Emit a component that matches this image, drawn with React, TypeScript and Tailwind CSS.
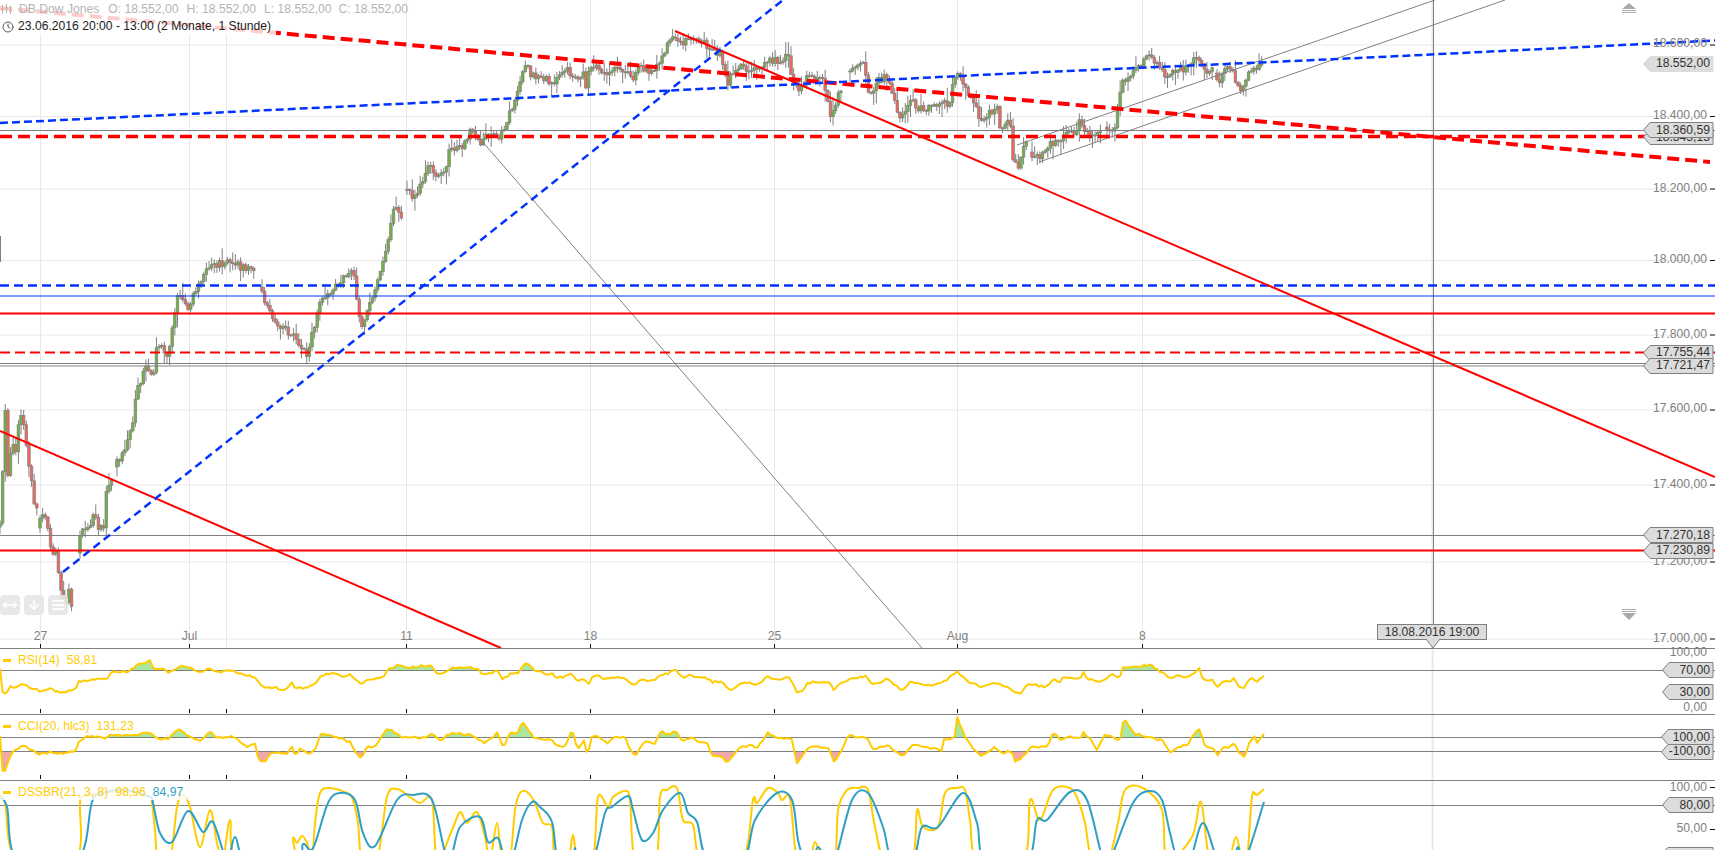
import { useMemo } from 'react';
import { ArrowDown, AlignJustify, Clock, MoveHorizontal } from 'lucide-react';

type Pt = [number, number];

const GRAY = '#808080';
const RED = '#ff0000';
const BLUE = '#0033ff';
const YELLOW = '#ffcc00';
const TEAL = '#2e9fc5';

// price path read off the chart, split where the session gaps are
const priceSegments: Pt[][] = [
  [[0,527],[3,527],[8,410],[10,478],[15,443],[18,457],[23,410],[28,430],[30,457],[35,487],[37,505]],
  [[40,528],[47,510],[52,533],[55,560],[60,547],[62,590],[68,603],[72,587],[74,607]],
  [[80,553],[84,530],[90,528],[95,520],[97,503],[100,527],[107,527],[108,493],[113,483]],
  [[117,467],[127,453],[133,430],[137,413],[138,397],[143,383],[148,363],[153,370],[157,373],[158,350],[163,345],[170,360],[173,345],[180,295],[191,306],[210,268],[230,262],[254,270]],
  [[262,287],[273,312],[284,328],[295,333],[310,355],[323,301],[339,284],[356,273],[363,328],[377,290],[388,252],[396,213],[397,208],[403,217]],
  [[407,190],[418,197],[427,177],[433,163],[438,180],[447,173],[452,150],[465,147],[473,132],[483,143],[497,130],[503,137],[514,109],[522,87],[527,62],[533,73],[543,78],[557,82],[570,70],[580,82],[586,73],[587,97],[590,73],[597,63],[607,73],[623,67],[635,80],[642,68],[657,72],[667,53],[675,33],[683,43],[697,42],[708,42],[713,50],[723,53],[730,82],[742,67],[757,70],[767,62],[780,60],[792,57],[795,83],[802,90],[812,75],[827,83],[833,117],[843,90]],
  [[850,72],[867,65],[872,97],[880,80],[890,78],[897,100],[903,123],[912,97],[920,108],[937,108],[943,100],[952,105],[957,75],[962,73],[967,90],[975,95],[982,122],[990,113],[1000,110],[1003,130],[1010,120],[1014,130],[1015,157],[1022,167],[1027,142]],
  [[1032,152],[1038,157],[1047,155],[1052,142],[1062,145],[1068,133],[1078,135],[1083,120],[1088,132],[1098,138],[1103,133]],
  [[1107,127],[1118,127],[1122,97],[1125,80],[1137,73],[1143,65],[1152,57],[1160,65],[1170,77],[1182,70],[1192,65],[1200,53],[1203,65],[1207,73],[1213,68]],
  [[1217,73],[1222,82],[1227,72],[1237,67],[1238,83],[1247,90],[1250,75],[1257,67],[1258,75],[1263,62]],
];

const rsi: Pt[] = [[0,670],[3,696],[7,693],[10,687],[18,687],[23,683],[30,687],[40,691],[50,689],[62,693],[75,690],[78,682],[97,679],[107,680],[110,673],[130,671],[137,665],[150,661],[153,669],[163,668],[170,673],[180,665],[193,669],[200,672],[210,668],[217,673],[230,669],[243,675],[255,677],[265,689],[273,687],[285,691],[292,682],[295,688],[307,688],[315,685],[322,675],[337,673],[343,678],[350,674],[362,685],[367,680],[383,677],[388,669],[400,665],[407,668],[430,665],[437,673],[447,672],[453,668],[477,668],[483,675],[497,671],[503,679],[510,674],[518,673],[522,666],[527,664],[535,671],[542,672],[545,674],[552,673],[555,677],[565,677],[570,673],[578,682],[583,678],[588,685],[592,677],[598,675],[603,679],[612,677],[623,678],[633,684],[643,680],[655,680],[662,675],[668,674],[675,669],[683,678],[688,675],[697,677],[707,678],[713,682],[723,682],[730,691],[740,683],[745,682],[757,685],[767,677],[780,679],[790,677],[797,692],[803,692],[807,683],[815,682],[830,683],[833,691],[842,682],[853,678],[867,676],[872,685],[888,679],[902,691],[910,682],[933,685],[945,681],[957,672],[970,682],[982,687],[995,682],[1008,688],[1015,693],[1020,694],[1028,684],[1047,687],[1053,679],[1060,682],[1063,677],[1080,678],[1083,672],[1087,678],[1098,682],[1112,675],[1120,678],[1123,668],[1150,665],[1163,673],[1170,678],[1175,676],[1187,677],[1195,673],[1197,670],[1200,669],[1203,680],[1212,680],[1218,687],[1223,681],[1228,682],[1235,678],[1238,687],[1244,688],[1250,679],[1253,678],[1257,681],[1264,676]];

const cci: Pt[] = [[0,737],[3,776],[12,751],[23,746],[40,754],[50,752],[62,754],[75,752],[78,743],[87,737],[97,736],[103,739],[110,735],[137,735],[150,733],[155,738],[168,739],[177,729],[187,735],[200,741],[210,732],[217,738],[232,736],[248,747],[257,742],[258,760],[265,762],[270,753],[287,753],[293,745],[295,756],[300,749],[310,754],[317,748],[320,733],[333,736],[350,742],[355,752],[361,759],[367,745],[373,748],[380,740],[387,728],[403,737],[423,738],[433,734],[440,740],[452,733],[470,735],[485,743],[497,733],[503,747],[510,734],[518,733],[522,722],[527,727],[533,737],[542,739],[552,740],[558,747],[565,747],[572,730],[578,750],[584,741],[588,758],[591,737],[597,735],[608,745],[613,737],[627,738],[628,747],[636,756],[643,742],[655,743],[661,730],[667,735],[675,731],[683,741],[690,738],[708,744],[712,757],[720,755],[727,762],[740,748],[750,745],[757,748],[768,733],[780,739],[791,737],[797,763],[807,748],[815,746],[830,748],[833,763],[840,753],[848,736],[867,737],[873,749],[888,745],[897,753],[903,757],[913,744],[927,748],[942,750],[943,740],[955,737],[957,717],[965,737],[973,748],[982,756],[995,747],[1002,753],[1012,751],[1014,763],[1022,758],[1030,747],[1047,747],[1053,733],[1060,739],[1070,736],[1080,739],[1083,732],[1092,740],[1097,750],[1105,735],[1120,740],[1124,718],[1133,733],[1150,738],[1162,740],[1170,753],[1175,749],[1180,747],[1188,744],[1195,732],[1200,729],[1205,747],[1212,747],[1218,755],[1223,747],[1228,748],[1235,742],[1238,753],[1244,757],[1250,742],[1254,736],[1257,742],[1264,734]];

const dssFast: Pt[] = [[0,795],[5,803],[17,850],[75,850],[80,803],[82,797],[100,793],[125,791],[150,797],[152,803],[155,830],[158,850],[170,850],[177,807],[183,795],[190,807],[200,847],[210,810],[217,843],[223,850],[230,820],[237,850],[290,850],[293,838],[297,843],[302,836],[307,843],[312,850],[315,823],[320,793],[330,788],[347,793],[353,800],[358,823],[362,850],[377,850],[387,797],[397,789],[410,797],[420,803],[432,800],[437,850],[452,830],[460,812],[467,823],[477,812],[485,837],[490,850],[497,823],[502,850],[510,850],[515,810],[520,793],[527,792],[535,803],[543,823],[552,827],[555,850],[568,850],[573,835],[578,850],[593,850],[598,797],[608,807],[613,797],[625,791],[630,800],[635,850],[656,850],[660,797],[667,790],[677,788],[683,820],[693,825],[702,850],[742,850],[753,800],[757,803],[768,788],[778,793],[782,800],[790,799],[797,850],[810,850],[815,842],[823,850],[835,850],[838,810],[847,790],[858,788],[868,790],[875,827],[885,850],[912,850],[917,810],[923,827],[938,827],[945,793],[957,788],[965,790],[970,820],[978,850],[1023,850],[1030,800],[1040,820],[1053,790],[1070,788],[1078,800],[1085,823],[1092,850],[1108,850],[1118,823],[1125,790],[1143,788],[1162,810],[1167,850],[1192,837],[1201,802],[1210,850],[1228,850],[1236,837],[1242,850],[1247,850],[1252,797],[1257,795],[1264,789]];

const dssSlow: Pt[] = [[0,797],[7,807],[18,850],[77,850],[92,802],[103,793],[125,790],[150,797],[153,803],[160,833],[172,842],[188,811],[203,832],[213,822],[227,850],[235,837],[247,850],[297,850],[303,844],[313,848],[328,803],[340,793],[355,800],[363,833],[375,846],[397,800],[413,795],[432,800],[448,850],[460,827],[480,817],[488,842],[498,838],[505,850],[512,850],[522,820],[532,802],[540,807],[552,822],[558,850],[572,850],[575,848],[578,850],[593,850],[605,813],[612,807],[628,796],[633,810],[642,840],[653,833],[663,810],[680,793],[688,813],[697,822],[708,850],[743,850],[755,820],[777,793],[792,800],[798,840],[805,850],[813,850],[818,847],[827,850],[835,850],[852,800],[868,793],[883,827],[892,850],[913,850],[922,827],[938,827],[963,793],[977,823],[985,850],[1027,850],[1037,820],[1047,820],[1070,792],[1087,800],[1103,850],[1110,850],[1133,803],[1150,791],[1162,800],[1170,833],[1178,850],[1190,850],[1203,823],[1218,850],[1233,850],[1238,847],[1245,850],[1264,802]];

const dayTicks = [40, 189, 226, 406, 590, 774, 957, 1142];
const dayLabels: [number, string][] = [[40,'27'],[189,'Jul'],[406,'11'],[590,'18'],[774,'25'],[957,'Aug'],[1142,'8']];
const gridY = [45, 116.5, 189, 260.5, 335, 410, 485, 562, 639];

const line = (pts: Pt[]) => pts.map((p) => `${p[0]},${p[1]}`).join(' ');

const makeRnd = (start: number) => {
  let seed = start;
  return () => {
    seed = (seed * 16807) % 2147483647;
    return seed / 2147483647;
  };
};

// catmull-rom, the stochastic lines in the reference are smoothed
const smooth = (raw: Pt[]) => {
  const pts = raw.map(([x, y]): Pt => [x, y >= 850 ? 860 : y]);
  let d = `M${pts[0][0]} ${pts[0][1]}`;
  for (let i = 0; i < pts.length - 1; i++) {
    const a = pts[Math.max(i - 1, 0)];
    const b = pts[i];
    const c = pts[i + 1];
    const e = pts[Math.min(i + 2, pts.length - 1)];
    d += ` C${b[0] + (c[0] - a[0]) / 6} ${b[1] + (c[1] - a[1]) / 6} ${c[0] - (e[0] - b[0]) / 6} ${c[1] - (e[1] - b[1]) / 6} ${c[0]} ${c[1]}`;
  }
  return d;
};

const lerp = (seg: Pt[], x: number) => {
  for (let i = 0; i < seg.length - 1; i++) {
    if (x <= seg[i + 1][0]) {
      const t = (x - seg[i][0]) / (seg[i + 1][0] - seg[i][0] || 1);
      return seg[i][1] + (seg[i + 1][1] - seg[i][1]) * t;
    }
  }
  return seg[seg.length - 1][1];
};

// one point per bar with a little wobble, so the oscillators don't look like straight runs
const densify = (pts: Pt[], seed: number) => {
  const rnd = makeRnd(seed);
  const out: Pt[] = [];
  const end = pts[pts.length - 1][0];
  for (let x = pts[0][0]; x < end; x += 2.63) {
    out.push([x, lerp(pts, x) + (rnd() - 0.5) * 2.2]);
  }
  out.push(pts[pts.length - 1]);
  return out;
};

const buildCandles = () => {
  const rnd = makeRnd(1234);
  const out: { x: number; o: number; c: number; hi: number; lo: number }[] = [];
  for (const seg of priceSegments) {
    const end = seg[seg.length - 1][0];
    let prev = seg[0][1];
    for (let x = seg[0][0]; x <= end; x += 2.63) {
      const c = lerp(seg, x + 2.63) + (rnd() - 0.5) * 8;
      out.push({
        x,
        o: prev,
        c,
        hi: Math.min(prev, c) - rnd() * rnd() * 14 - 1,
        lo: Math.max(prev, c) + rnd() * rnd() * 14 + 1,
      });
      prev = c;
    }
  }
  return out;
};

const Candles = () => {
  const candles = useMemo(buildCandles, []);
  return (
    <g>
      {candles.map((k, i) => {
        const top = Math.min(k.o, k.c);
        const h = Math.max(Math.abs(k.o - k.c), 1);
        return (
          <g key={i}>
            <line x1={k.x} x2={k.x} y1={k.hi} y2={k.lo} stroke={GRAY} strokeWidth={1} />
            <rect x={k.x - 1.3} y={top} width={2.6} height={h} fill={k.c < k.o ? '#6cb33f' : '#f0675c'} stroke={GRAY} strokeWidth={0.7} />
          </g>
        );
      })}
    </g>
  );
};

const Axis = ({ y, text, top }: { y: number; text: string; top: number }) => (
  <div className="absolute right-2 h-4 flex items-center text-[12.15px] leading-none text-[#808080]" style={{ top: y - top - 8 }}>
    {text}
  </div>
);

const Tag = ({ y, text, tip, top, soft }: { y: number; text: string; tip: number; top: number; soft?: boolean }) => {
  const w = 1713 - tip;
  return (
    <div className="absolute h-4 flex items-center justify-end pr-[3px] text-[12.15px] leading-none text-[#333333]" style={{ top: y - top - 8, left: tip, width: w }}>
      <svg className="absolute inset-0 overflow-visible" width={w} height={16}>
        <path d={`M0.5 8 L7 0.5 H${w} V15.5 H7 Z`} fill="#dcdcdc" stroke={soft ? '#dcdcdc' : GRAY} strokeWidth={1} />
      </svg>
      <span className="relative">{text}</span>
    </div>
  );
};

const Panel = ({ top, height, children }: { top: number; height: number; children: React.ReactNode }) => (
  <svg className="absolute inset-0" width={1715} height={height} viewBox={`0 ${top} 1715 ${height}`}>
    {children}
  </svg>
);

const Hl = ({ y, x2 = 1715, color = GRAY, w = 1, dash }: { y: number; x2?: number; color?: string; w?: number; dash?: string }) => (
  <line x1={0} x2={x2} y1={y} y2={y} stroke={color} strokeWidth={w} strokeDasharray={dash} />
);

const LowerTicks = ({ y }: { y: number }) => (
  <g>
    {dayTicks.map((x) => (
      <line key={x} x1={x + 0.5} x2={x + 0.5} y1={y} y2={y + 4} stroke="#111111" />
    ))}
  </g>
);

const AxisTick = ({ y }: { y: number }) => <line x1={1710} x2={1715} y1={y} y2={y} stroke="#111111" />;

const Bar = () => <span className="w-2 h-[3px] bg-[#ffcc00] mr-[7px] ml-[3px]" />;

const MainChart = () => (
  <div className="relative h-[649px]">
    <Panel top={0} height={649}>
      {gridY.map((y) => <Hl key={y} y={y} color="#e8e8e8" />)}
      {dayTicks.map((x) => <line key={x} x1={x + 0.5} x2={x + 0.5} y1={0} y2={648} stroke="#e8e8e8" />)}
      <line x1={1432.5} x2={1432.5} y1={0} y2={649} stroke="#e8e8e8" strokeWidth={2} />

      <line x1={0.5} x2={0.5} y1={236} y2={262} stroke={GRAY} />
      <Candles />

      <Hl y={130.5} />
      <Hl y={363.5} />
      <Hl y={366} />
      <Hl y={535.5} />
      <line x1={1433.5} x2={1433.5} y1={0} y2={624} stroke={GRAY} />

      <line x1={481} y1={140} x2={922} y2={648} stroke={GRAY} strokeWidth={1} />
      <line x1={1017} y1={145} x2={1435} y2={0} stroke={GRAY} strokeWidth={1} />
      <line x1={1039} y1={162} x2={1505} y2={0} stroke={GRAY} strokeWidth={1} />

      <Hl y={296} color={BLUE} />
      <Hl y={285.5} color={BLUE} w={2.5} dash="9 5" />
      <Hl y={313.5} color={RED} w={2} />
      <Hl y={550.5} color={RED} w={2} />
      <Hl y={352.5} color={RED} w={2} dash="10 5" />

      <line x1={0} y1={431} x2={501} y2={648} stroke={RED} strokeWidth={2} />
      <line x1={675} y1={31} x2={1715} y2={477} stroke={RED} strokeWidth={2} />
      <line x1={0} y1={8} x2={1710} y2={162} stroke={RED} strokeWidth={4} strokeDasharray="12 6" />
      <line x1={0} x2={1645} y1={136.5} y2={136.5} stroke={RED} strokeWidth={3.5} strokeDasharray="12 6" />
      <polyline points="0,123 500,99 1000,74 1300,60.7 1400,56 1715,40.5" fill="none" stroke={BLUE} strokeWidth={2.5} strokeDasharray="8 4" />
      <line x1={63} y1={572} x2={783} y2={0} stroke={BLUE} strokeWidth={2.5} strokeDasharray="8 5" />

      {gridY.map((y) => <AxisTick key={y} y={y} />)}
      {dayLabels.map(([x]) => <line key={x} x1={x + 0.5} x2={x + 0.5} y1={644} y2={648} stroke="#111111" />)}
      <Hl y={648.5} />

      <path d="M1629 3 L1636 9 H1622 Z" fill="#aaaaaa" />
      <path d="M1622 10.5 H1636 M1622 12.5 H1636" stroke="#aaaaaa" />
      <path d="M1622 609.5 H1636 M1622 611.5 H1636" stroke="#aaaaaa" />
      <path d="M1622 613 H1636 L1629 620 Z" fill="#aaaaaa" />
    </Panel>

    {dayLabels.map(([x, t]) => (
      <div key={t} className="absolute top-[629px] w-10 text-center text-[12.15px] leading-[14px] text-[#808080]" style={{ left: x - 19.5 }}>
        {t}
      </div>
    ))}

    <Axis top={0} y={43} text="18.600,00" />
    <Axis top={0} y={115} text="18.400,00" />
    <Axis top={0} y={188} text="18.200,00" />
    <Axis top={0} y={259} text="18.000,00" />
    <Axis top={0} y={334} text="17.800,00" />
    <Axis top={0} y={408} text="17.600,00" />
    <Axis top={0} y={484} text="17.400,00" />
    <Axis top={0} y={561} text="17.200,00" />
    <Axis top={0} y={638} text="17.000,00" />

    <Tag top={0} y={63.5} tip={1643} text="18.552,00" soft />
    <Tag top={0} y={137} tip={1643} text="18.345,15" />
    <Tag top={0} y={130} tip={1643} text="18.360,59" />
    <Tag top={0} y={352.5} tip={1643} text="17.755,44" />
    <Tag top={0} y={365.5} tip={1643} text="17.721,47" />
    <Tag top={0} y={535} tip={1643} text="17.270,18" />
    <Tag top={0} y={550.5} tip={1643} text="17.230,89" />

    <div className="absolute left-0 top-0 flex flex-col items-start">
      <div className="h-[18px] w-[406px] bg-white/80 flex items-center whitespace-nowrap text-[12.15px] text-[#b4b4b4]">
        <svg className="ml-[1px] mr-[7px] shrink-0" width={11} height={12} viewBox="0 0 11 12">
          <path d="M1.5 2 V11 M5.5 1 V10 M9.5 3 V11" stroke="#b0b0b0" />
          <path d="M0.5 5 H2.5 V8 H0.5 Z M8.5 6 H10.5 V9 H8.5 Z" fill="#e7a3a0" />
          <path d="M4.5 4 H6.5 V7 H4.5 Z" fill="#a9cf90" />
        </svg>
        <span className="mr-[9px]">DB Dow Jones</span>
        <span className="mr-[8px]">O: 18.552,00</span>
        <span className="mr-[8px]">H: 18.552,00</span>
        <span className="mr-[7px]">L: 18.552,00</span>
        <span>C: 18.552,00</span>
      </div>
      <div className="h-[17px] w-[276px] bg-white/80 flex items-center whitespace-nowrap text-[12.15px] text-[#222222]">
        <Clock className="ml-[2px] mr-[4px] shrink-0" size={12} strokeWidth={1.5} />
        <span>23.06.2016 20:00 - 13:00 (2 Monate, 1 Stunde)</span>
      </div>
    </div>

    <div className="absolute left-0 top-[595px] flex gap-1 text-white">
      <div className="w-5 h-5 rounded bg-[#e6e6e6]/90 flex items-center justify-center"><MoveHorizontal size={16} /></div>
      <div className="w-5 h-5 rounded bg-[#e6e6e6]/90 flex items-center justify-center"><ArrowDown size={14} strokeWidth={3} /></div>
      <div className="w-5 h-5 rounded bg-[#e6e6e6]/90 flex items-center justify-center"><AlignJustify size={14} strokeWidth={3} /></div>
    </div>

    <div className="absolute left-[1377px] top-[624px] w-[110px] h-[16px] bg-[#dcdcdc] border border-[#808080] flex items-center justify-center text-[12.15px] leading-none text-[#333333]">
      18.08.2016 19:00
      <svg className="absolute left-[48px] top-[14px]" width={14} height={10}>
        <path d="M0 0 L7 9 L14 0" fill="#dcdcdc" stroke={GRAY} />
      </svg>
    </div>
  </div>
);

const Indicator = ({ top, height, raw, seed, upper, lower, id }: { top: number; height: number; raw: Pt[]; seed: number; upper: number; lower?: number; id: string }) => {
  const pts = useMemo(() => densify(raw, seed), [raw, seed]);
  const first = pts[0][0];
  const last = pts[pts.length - 1][0];
  return (
    <Panel top={top} height={height}>
      <defs>
        <clipPath id={`${id}-up`}><rect x={0} y={top} width={1715} height={upper - top} /></clipPath>
        {lower !== undefined && <clipPath id={`${id}-dn`}><rect x={0} y={lower} width={1715} height={top + height - lower} /></clipPath>}
      </defs>
      <line x1={1432.5} x2={1432.5} y1={top} y2={top + height} stroke="#e8e8e8" strokeWidth={2} />
      <polygon points={`${line(pts)} ${last},${upper} ${first},${upper}`} fill="#a9e8a2" clipPath={`url(#${id}-up)`} />
      {lower !== undefined && <polygon points={`${line(pts)} ${last},${lower} ${first},${lower}`} fill="#eeaaaa" clipPath={`url(#${id}-dn)`} />}
      <Hl y={upper + 0.5} />
      {lower !== undefined && <Hl y={lower + 0.5} />}
      <polyline points={line(pts)} fill="none" stroke={YELLOW} strokeWidth={2} strokeLinejoin="round" />
      <LowerTicks y={top + height - 6} />
      <Hl y={top + height - 0.5} />
    </Panel>
  );
};

const App = () => (
  <div className="w-[1715px] h-[850px] overflow-hidden bg-white font-['Liberation_Sans',Arial,sans-serif] flex flex-col">
    <MainChart />

    <div className="relative h-[66px]">
      <Indicator id="rsi" top={649} height={66} raw={rsi} seed={77} upper={670} />
      <div className="absolute left-0 top-[3px] h-4 flex items-center whitespace-nowrap text-[12.15px] text-[#ffcc00] bg-white/80 pr-1">
        <Bar /><span className="mr-[7px]">RSI(14)</span><span>58,81</span>
      </div>
      <Axis top={649} y={652} text="100,00" />
      <Axis top={649} y={707} text="0,00" />
      <Tag top={649} y={670} tip={1662} text="70,00" />
      <Tag top={649} y={692} tip={1662} text="30,00" />
    </div>

    <div className="relative h-[66px]">
      <Indicator id="cci" top={715} height={66} raw={cci} seed={991} upper={737} lower={751} />
      <div className="absolute left-0 top-[3px] h-4 flex items-center whitespace-nowrap text-[12.15px] text-[#ffcc00] bg-white/80 pr-1">
        <Bar /><span className="mr-[7px]">CCI(20, hlc3)</span><span>131,23</span>
      </div>
      <Tag top={715} y={737} tip={1661} text="100,00" />
      <Tag top={715} y={751.5} tip={1661} text="-100,00" />
    </div>

    <div className="relative h-[69px]">
      <Panel top={781} height={69}>
        <line x1={1432.5} x2={1432.5} y1={781} y2={850} stroke="#e8e8e8" strokeWidth={2} />
        <Hl y={805.5} />
        <path d={smooth(dssFast)} fill="none" stroke={YELLOW} strokeWidth={2} />
        <path d={smooth(dssSlow)} fill="none" stroke={TEAL} strokeWidth={2} />
        <AxisTick y={787.5} />
        <AxisTick y={829.5} />
        <path d="M1662 853 L1668 847.5 H1713 V853 Z" fill="#dcdcdc" stroke={GRAY} />
      </Panel>
      <div className="absolute left-0 top-[3px] h-4 flex items-center whitespace-nowrap text-[12.15px] text-[#ffcc00] bg-white/80 pr-1">
        <Bar /><span className="mr-[7px]">DSSBR(21, 3, 8)</span><span className="mr-[7px]">98,96</span><span className="text-[#2e9fc5]">84,97</span>
      </div>
      <Axis top={781} y={787} text="100,00" />
      <Axis top={781} y={828} text="50,00" />
      <Tag top={781} y={805} tip={1662} text="80,00" />
    </div>
  </div>
);

export default App;
